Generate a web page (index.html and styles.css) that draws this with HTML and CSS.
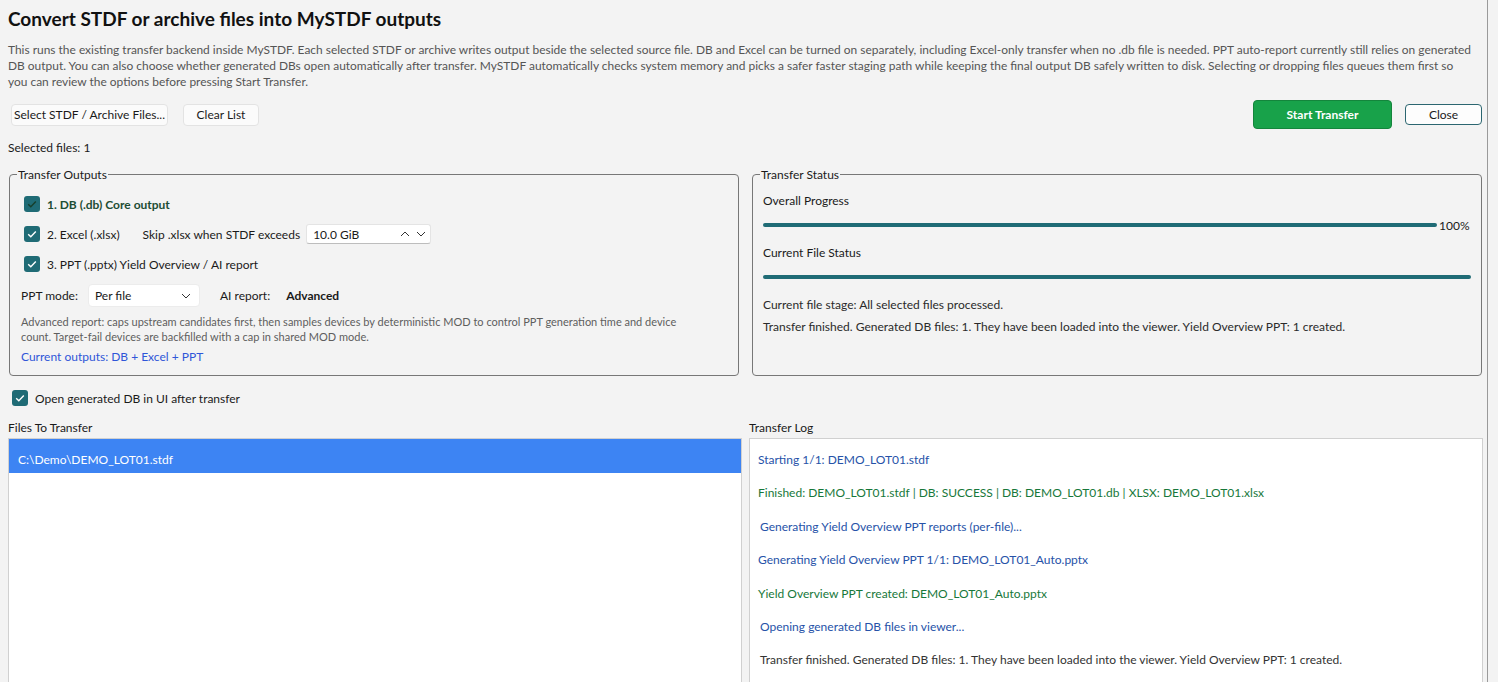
FILE: index.html
```html
<!DOCTYPE html>
<html lang="en">
<head>
  <meta charset="UTF-8">
  <title>MySTDF Transfer</title>
  <link rel="stylesheet" href="styles.css">
</head>
<body>
  <div class="app">
    <h1 class="title">Convert STDF or archive files into MySTDF outputs</h1>
    <p class="intro">
      This runs the existing transfer backend inside MySTDF. Each selected STDF or archive writes output beside the selected source file. DB and Excel can be turned on separately, including Excel-only transfer when no .db file is needed. PPT auto-report currently still relies on generated<br>
      DB output. You can also choose whether generated DBs open automatically after transfer. MySTDF automatically checks system memory and picks a safer faster staging path while keeping the final output DB safely written to disk. Selecting or dropping files queues them first so<br>
      you can review the options before pressing Start Transfer.
    </p>

    <div class="toolbar">
      <div class="toolbar-group">
        <button class="btn btn-select">Select STDF / Archive Files...</button>
        <button class="btn btn-clear">Clear List</button>
      </div>
      <div class="toolbar-group toolbar-end">
        <button class="btn btn-primary">Start Transfer</button>
        <button class="btn btn-close">Close</button>
      </div>
    </div>

    <div class="selected-count">Selected files: 1</div>

    <div class="panels">
      <fieldset class="group group-outputs">
        <legend>Transfer Outputs</legend>

        <div class="opt-row">
          <span class="check check-locked">
            <svg width="16" height="16" viewBox="0 0 16 16"><rect width="16" height="16" rx="3" fill="#1f6b75"/><path d="M4.2 8.3 L6.8 10.8 L11.8 5.6" fill="none" stroke="#173f2c" stroke-width="1.4"/></svg>
          </span>
          <span class="opt-core">1. DB (.db) Core output</span>
        </div>

        <div class="opt-row">
          <span class="check">
            <svg width="16" height="16" viewBox="0 0 16 16"><rect width="16" height="16" rx="3" fill="#1f6b75"/><path d="M4.2 8.3 L6.8 10.8 L11.8 5.6" fill="none" stroke="#fff" stroke-width="1.4"/></svg>
          </span>
          <span>2. Excel (.xlsx)</span>
          <span class="skip-label">Skip .xlsx when STDF exceeds</span>
          <div class="spinbox">
            <span>10.0 GiB</span>
            <span class="spin-arrows">
              <svg width="10" height="6" viewBox="0 0 10 6"><path d="M1 5 L5 1 L9 5" fill="none" stroke="#333" stroke-width="1"/></svg>
              <svg width="10" height="6" viewBox="0 0 10 6"><path d="M1 1 L5 5 L9 1" fill="none" stroke="#333" stroke-width="1"/></svg>
            </span>
          </div>
        </div>

        <div class="opt-row">
          <span class="check">
            <svg width="16" height="16" viewBox="0 0 16 16"><rect width="16" height="16" rx="3" fill="#1f6b75"/><path d="M4.2 8.3 L6.8 10.8 L11.8 5.6" fill="none" stroke="#fff" stroke-width="1.4"/></svg>
          </span>
          <span>3. PPT (.pptx) Yield Overview / AI report</span>
        </div>

        <div class="mode-row">
          <span>PPT mode:</span>
          <div class="combo">
            <span>Per file</span>
            <svg width="10" height="6" viewBox="0 0 10 6"><path d="M1 1 L5 5 L9 1" fill="none" stroke="#333" stroke-width="1"/></svg>
          </div>
          <span class="ai-label">AI report:</span>
          <span class="ai-value">Advanced</span>
        </div>

        <p class="note">Advanced report: caps upstream candidates first, then samples devices by deterministic MOD to control PPT generation time and device<br>count. Target-fail devices are backfilled with a cap in shared MOD mode.</p>
        <div class="current-outputs">Current outputs: DB + Excel + PPT</div>
      </fieldset>

      <fieldset class="group group-status">
        <legend>Transfer Status</legend>
        <div class="status-label">Overall Progress</div>
        <div class="progress-row">
          <div class="bar"></div>
          <span class="pct">100%</span>
        </div>
        <div class="status-label">Current File Status</div>
        <div class="progress-row">
          <div class="bar"></div>
        </div>
        <div class="status-text">Current file stage: All selected files processed.</div>
        <div class="status-text">Transfer finished. Generated DB files: 1. They have been loaded into the viewer. Yield Overview PPT: 1 created.</div>
      </fieldset>
    </div>

    <div class="open-row">
      <span class="check">
        <svg width="16" height="16" viewBox="0 0 16 16"><rect width="16" height="16" rx="3" fill="#1f6b75"/><path d="M4.2 8.3 L6.8 10.8 L11.8 5.6" fill="none" stroke="#fff" stroke-width="1.4"/></svg>
      </span>
      <span>Open generated DB in UI after transfer</span>
    </div>

    <div class="lists">
      <section class="pane">
        <div class="pane-title">Files To Transfer</div>
        <ul class="file-list">
          <li class="selected">C:\Demo\DEMO_LOT01.stdf</li>
        </ul>
      </section>
      <section class="pane">
        <div class="pane-title">Transfer Log</div>
        <ul class="log">
          <li class="info">Starting 1/1: DEMO_LOT01.stdf</li>
          <li class="ok">Finished: DEMO_LOT01.stdf | DB: SUCCESS | DB: DEMO_LOT01.db | XLSX: DEMO_LOT01.xlsx</li>
          <li class="info indent">Generating Yield Overview PPT reports (per-file)...</li>
          <li class="info">Generating Yield Overview PPT 1/1: DEMO_LOT01_Auto.pptx</li>
          <li class="ok">Yield Overview PPT created: DEMO_LOT01_Auto.pptx</li>
          <li class="info indent">Opening generated DB files in viewer...</li>
          <li class="plain indent">Transfer finished. Generated DB files: 1. They have been loaded into the viewer. Yield Overview PPT: 1 created.</li>
        </ul>
      </section>
    </div>
  </div>
</body>
</html>
```

FILE: styles.css
```css
html, body {
  margin: 0;
  height: 100%;
  overflow: hidden;
}
body {
  background: #f3f3f3;
  font-family: Lato, "Noto Sans", sans-serif;
  font-size: 12px;
  color: #1a1a1a;
}
.app {
  width: 1488px;
  height: 682px;
  padding: 7px 0 0 8px;
  border-right: 1px solid #9a9a9a;
  box-sizing: border-box;
}
.title {
  margin: 0;
  font-size: 19px;
  line-height: 24px;
  font-weight: bold;
  color: #111;
}
.intro {
  margin: 11px 0 0;
  font-size: 11.94px;
  line-height: 16px;
  color: #555;
  white-space: nowrap;
}
.toolbar {
  display: flex;
  justify-content: space-between;
  align-items: center;
  width: 1474px;
  height: 29px;
  margin-top: 10px;
}
.toolbar-group {
  display: flex;
  align-items: center;
  gap: 15px;
  padding-left: 3px;
}
.toolbar-end {
  gap: 13px;
  padding-left: 0;
}
.btn {
  font: inherit;
  height: 22px;
  padding: 0;
  background: #fbfbfb;
  border: 1px solid #e3e3e3;
  border-radius: 4px;
  color: #1a1a1a;
}
.btn-select {
  width: 157px;
}
.btn-clear {
  width: 76px;
}
.btn-primary {
  width: 139px;
  height: 29px;
  background: #18a24a;
  border-color: #14853c;
  color: #fff;
  font-weight: bold;
}
.btn-close {
  width: 77px;
  height: 21px;
  background: #fdfdfd;
  border-color: #2c6670;
}
.selected-count {
  margin-top: 11px;
  line-height: 16px;
}
.panels, .lists {
  display: grid;
  grid-template-columns: 734px 734px;
  gap: 7px;
}
.panels {
  margin-top: 10px;
}
.group {
  margin: 0;
  min-width: 0;
  height: 210px;
  box-sizing: border-box;
  border: 1px solid #777;
  border-radius: 4px;
  padding: 9px 10px 0 11px;
}
.group-outputs {
  margin: 0 3px 0 1px;
}
.group-status {
  margin: 0 1px 0 3px;
  padding: 10px 10px 0 10px;
}
.group legend {
  padding: 0 1px;
  margin-left: -4px;
  line-height: 17px;
}
.group-status legend {
  margin-left: -3px;
}
.opt-row {
  display: flex;
  align-items: center;
  height: 24px;
  margin: 0 0 6px 3px;
}
.check {
  display: inline-flex;
  width: 16px;
  height: 16px;
  margin-right: 7px;
}
.opt-core {
  font-weight: bold;
  color: #1d4d33;
}
.skip-label {
  margin-left: 23px;
}
.spinbox {
  display: flex;
  align-items: center;
  justify-content: space-between;
  width: 125px;
  height: 20px;
  margin-left: 6px;
  padding: 0 6px;
  box-sizing: border-box;
  background: #fff;
  border: 1px solid #e4e4e4;
  border-bottom-color: #bdbdbd;
  border-radius: 3px;
}
.spin-arrows {
  display: flex;
  gap: 6px;
  margin-right: -2px;
}
.mode-row {
  display: flex;
  align-items: center;
  height: 23px;
  margin-top: 8px;
}
.combo {
  display: flex;
  align-items: center;
  justify-content: space-between;
  width: 112px;
  height: 23px;
  margin-left: 10px;
  padding: 0 8px 0 6px;
  box-sizing: border-box;
  background: #fff;
  border: 1px solid #ececec;
  border-radius: 4px;
}
.ai-label {
  margin-left: 20px;
}
.ai-value {
  margin-left: 16px;
  font-weight: bold;
}
.note {
  margin: 7px 0 0;
  font-size: 11px;
  line-height: 15px;
  color: #5e5e5e;
  white-space: nowrap;
}
.current-outputs {
  margin-top: 5px;
  line-height: 16px;
  color: #2f56d8;
}
.status-label {
  line-height: 16px;
}
.progress-row {
  display: flex;
  align-items: center;
  height: 14px;
  margin: 9px 0 13px;
}
.bar {
  flex: 1;
  height: 4px;
  background: #1f6b75;
  border-radius: 2px;
}
.pct {
  width: 34px;
  padding-left: 2px;
  box-sizing: border-box;
}
.status-text {
  line-height: 16px;
  margin-top: 6px;
  color: #2a2a2a;
}
.progress-row + .status-text {
  margin-top: 12px;
}
.open-row {
  display: flex;
  align-items: center;
  height: 16px;
  margin: 14px 0 0 4px;
}
.pane-title {
  margin-top: 14px;
  line-height: 16px;
}
.file-list, .log {
  list-style: none;
  margin: 2px 0 0;
  padding: 0;
  height: 260px;
  background: #fff;
  border: 1px solid #d0d0d0;
  border-bottom: none;
}
.file-list li {
  line-height: 24px;
  padding: 9px 0 1px 9px;
}
.file-list .selected {
  background: #3d84f3;
  color: #fff;
}
.log {
  padding-top: 4px;
}
.log li {
  line-height: 33.4px;
  padding-left: 8px;
  white-space: nowrap;
}
.log .indent {
  padding-left: 10px;
}
.log .info {
  color: #2652a8;
}
.log .ok {
  color: #17783a;
}
.log .plain {
  color: #333;
}
```
